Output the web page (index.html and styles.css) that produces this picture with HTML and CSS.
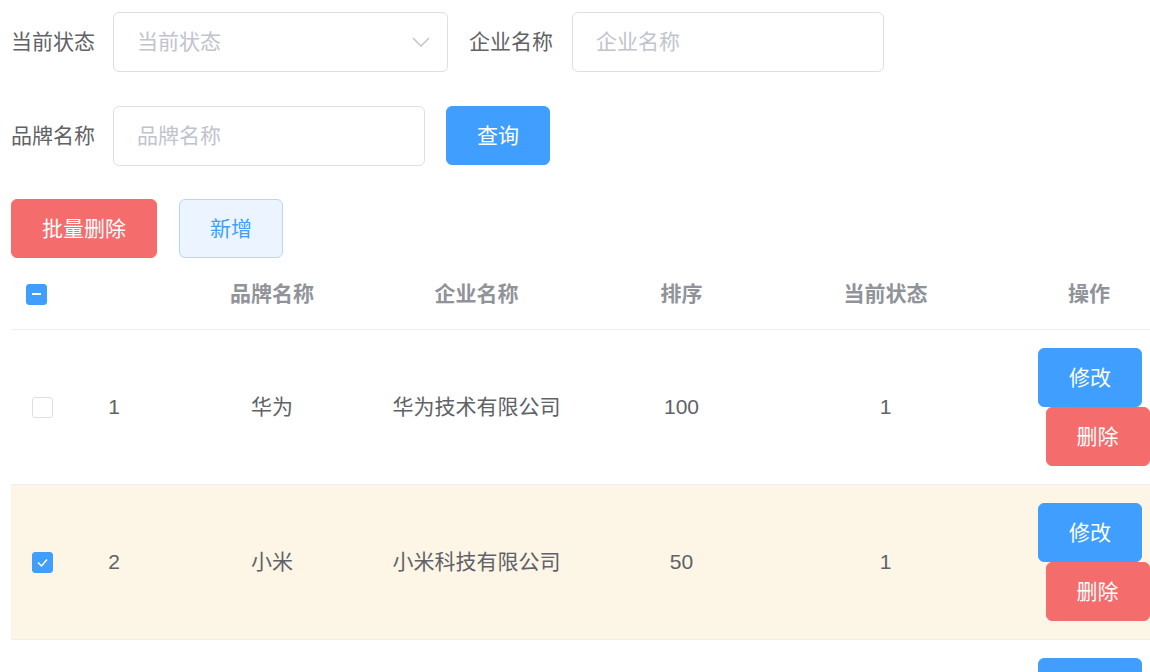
FILE: index.html
```html
<!DOCTYPE html>
<html lang="zh-CN">
<head>
<meta charset="utf-8">
<title>品牌管理</title>
<link rel="stylesheet" href="styles.css">
</head>
<body>
<form class="search">
  <div class="row">
    <div class="item">
      <label class="lbl">当前状态</label>
      <div class="select">
        <span class="ph">当前状态</span>
        <svg class="arrow" width="18" height="10" viewBox="0 0 18 10"><polyline points="1,1 9,9 17,1" fill="none" stroke="#c0c4cc" stroke-width="1.5"/></svg>
      </div>
    </div>
    <div class="item">
      <label class="lbl">企业名称</label>
      <input class="input" placeholder="企业名称">
    </div>
  </div>
  <div class="row">
    <div class="item">
      <label class="lbl">品牌名称</label>
      <input class="input" placeholder="品牌名称">
    </div>
    <button type="button" class="btn primary query">查询</button>
  </div>
</form>
<div class="toolbar">
  <button type="button" class="btn danger">批量删除</button>
  <button type="button" class="btn plain">新增</button>
</div>
<table class="grid">
  <colgroup>
    <col class="c-sel"><col class="c-idx"><col class="c-w"><col class="c-w2"><col class="c-w2"><col class="c-w3"><col class="c-w">
  </colgroup>
  <thead>
    <tr>
      <th class="sel-h"><span class="cb indeterminate"></span></th>
      <th></th>
      <th>品牌名称</th>
      <th>企业名称</th>
      <th>排序</th>
      <th>当前状态</th>
      <th>操作</th>
    </tr>
  </thead>
  <tbody>
    <tr>
      <td class="sel"><span class="cb"></span></td>
      <td>1</td>
      <td>华为</td>
      <td>华为技术有限公司</td>
      <td>100</td>
      <td>1</td>
      <td class="ops"><div class="ops-box"><button type="button" class="btn primary">修改</button><button type="button" class="btn danger">删除</button></div></td>
    </tr>
    <tr class="selected">
      <td class="sel"><span class="cb checked"><svg width="21" height="21" viewBox="0 0 21 21"><polyline points="6,10.5 9.5,14 15,7.5" fill="none" stroke="#fff" stroke-width="1.5"/></svg></span></td>
      <td>2</td>
      <td>小米</td>
      <td>小米科技有限公司</td>
      <td>50</td>
      <td>1</td>
      <td class="ops"><div class="ops-box"><button type="button" class="btn primary">修改</button><button type="button" class="btn danger">删除</button></div></td>
    </tr>
    <tr>
      <td class="sel"><span class="cb"></span></td>
      <td></td>
      <td></td>
      <td></td>
      <td></td>
      <td></td>
      <td class="ops"><div class="ops-box"><button type="button" class="btn primary" aria-label="修改"></button><button type="button" class="btn danger" aria-label="删除"></button></div></td>
    </tr>
  </tbody>
</table>
</body>
</html>
```
FILE: styles.css
```css
html, body {
  overflow: hidden;
}
body {
  margin: 0;
  padding: 12px 0 0 11px;
  font-family: "Liberation Sans", "Noto Sans CJK SC", sans-serif;
  font-size: 21px;
  color: #606266;
  background: #fff;
}
.search {
  margin: 0;
}
.row {
  display: flex;
  align-items: center;
  gap: 21px;
  height: 60px;
  margin-bottom: 34px;
}
.row + .row {
  margin-bottom: 33px;
}
.item {
  display: flex;
  align-items: center;
}
.lbl {
  color: #606266;
  font-size: 21px;
  line-height: 60px;
  margin-right: 18px;
}
.item + .item .lbl {
  margin-right: 19px;
}
.select, .input {
  box-sizing: border-box;
  height: 60px;
  border: 1px solid #dcdfe6;
  border-radius: 6px;
  background: #fff;
}
.select {
  width: 335px;
  display: flex;
  align-items: center;
  justify-content: space-between;
  padding: 0 17px 0 23px;
}
.ph {
  color: #c0c4cc;
  font-size: 21px;
  line-height: 1;
  margin-top: -2px;
}
.arrow {
  display: block;
}
.input {
  width: 312px;
  padding: 0 23px;
  font-family: "Liberation Sans", "Noto Sans CJK SC", sans-serif;
  font-size: 21px;
  color: #606266;
  outline: none;
}
.input::placeholder {
  color: #c0c4cc;
}
.btn {
  box-sizing: border-box;
  height: 59px;
  padding: 0 30px;
  border: 1px solid transparent;
  border-radius: 6px;
  font-family: "Liberation Sans", "Noto Sans CJK SC", sans-serif;
  font-size: 21px;
  line-height: 1;
  cursor: pointer;
  white-space: nowrap;
}
.query {
  align-self: flex-start;
}
.primary {
  background: #409eff;
  border-color: #409eff;
  color: #fff;
}
.danger {
  background: #f56c6c;
  border-color: #f56c6c;
  color: #fff;
}
.plain {
  background: #ecf5ff;
  border-color: #b3d8ff;
  color: #409eff;
}
.toolbar {
  display: flex;
  gap: 22px;
  margin-bottom: 1px;
}
.grid {
  table-layout: fixed;
  width: 1180px;
  border-collapse: collapse;
}
.c-sel { width: 47px; }
.c-idx { width: 112px; }
.c-w { width: 204px; }
.c-w2 { width: 205px; }
.c-w3 { width: 203px; }
.grid th, .grid td {
  padding: 18px 15px;
  line-height: 34px;
  text-align: center;
  vertical-align: middle;
  border-bottom: 1px solid #ebeef5;
  white-space: nowrap;
}
.grid th {
  color: #909399;
  font-weight: bold;
}
.grid td {
  color: #606266;
}
.grid .sel-h {
  padding-left: 15px;
  padding-right: 0;
  text-align: left;
}
.grid .sel {
  padding-left: 21px;
  padding-right: 0;
  text-align: left;
}
.grid .ops {
  padding-left: 16px;
  padding-right: 14px;
}
.selected td {
  background: #fdf5e6;
}
.cb {
  display: block;
  box-sizing: border-box;
  width: 21px;
  height: 21px;
  border: 1px solid #dcdfe6;
  border-radius: 3px;
  background: #fff;
  position: relative;
}
.cb svg {
  position: absolute;
  left: -1px;
  top: -1px;
}
.cb.checked, .cb.indeterminate {
  background: #409eff;
  border-color: #409eff;
}
.cb.indeterminate::after {
  content: "";
  position: absolute;
  left: 5px;
  top: 8.5px;
  width: 9px;
  height: 2px;
  background: #fff;
}
.ops-box {
  display: flex;
  flex-wrap: wrap;
  justify-content: center;
}
.ops-box .btn + .btn {
  margin-left: 15px;
}
.ops .btn {
  width: 104px;
  padding: 0;
}
```
